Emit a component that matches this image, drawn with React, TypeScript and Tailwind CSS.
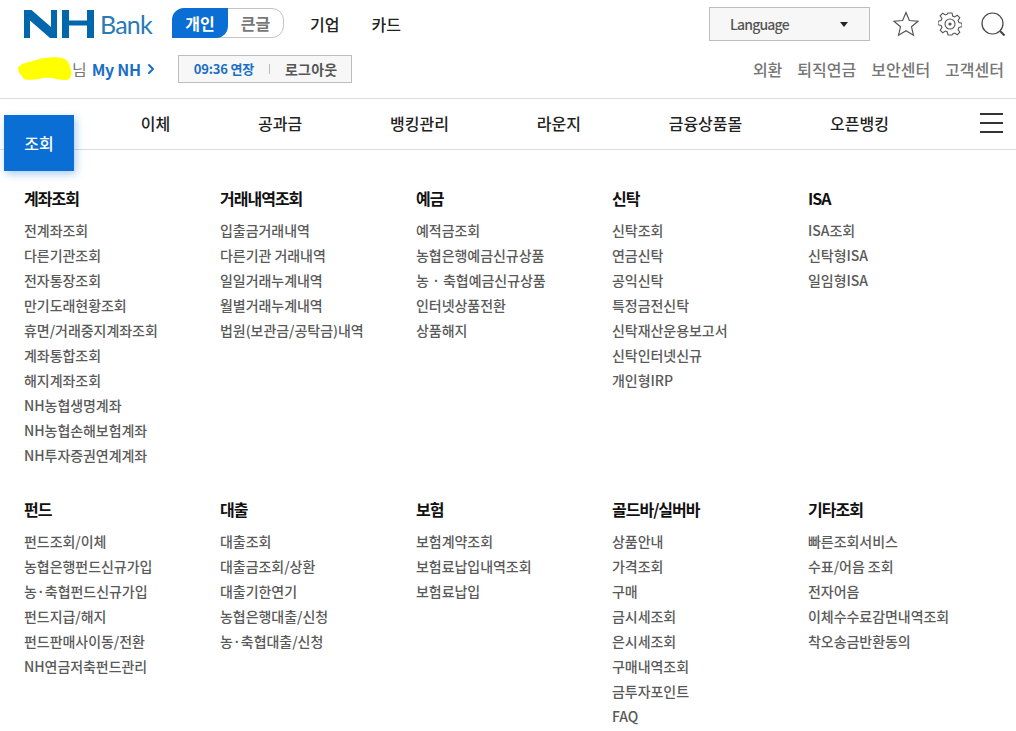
import { ChevronRight } from "lucide-react";

const font = "font-['Noto_Sans_CJK_KR','Noto_Sans',sans-serif]";

const navItems = ["이체", "공과금", "뱅킹관리", "라운지", "금융상품몰", "오픈뱅킹"];

const topRow = [
  { title: "계좌조회", items: ["전계좌조회", "다른기관조회", "전자통장조회", "만기도래현황조회", "휴면/거래중지계좌조회", "계좌통합조회", "해지계좌조회", "NH농협생명계좌", "NH농협손해보험계좌", "NH투자증권연계계좌"] },
  { title: "거래내역조회", items: ["입출금거래내역", "다른기관 거래내역", "일일거래누계내역", "월별거래누계내역", "법원(보관금/공탁금)내역"] },
  { title: "예금", items: ["예적금조회", "농협은행예금신규상품", "농 · 축협예금신규상품", "인터넷상품전환", "상품해지"] },
  { title: "신탁", items: ["신탁조회", "연금신탁", "공익신탁", "특정금전신탁", "신탁재산운용보고서", "신탁인터넷신규", "개인형IRP"] },
  { title: "ISA", items: ["ISA조회", "신탁형ISA", "일임형ISA"] },
];

const bottomRow = [
  { title: "펀드", items: ["펀드조회/이체", "농협은행펀드신규가입", "농·축협펀드신규가입", "펀드지급/해지", "펀드판매사이동/전환", "NH연금저축펀드관리"] },
  { title: "대출", items: ["대출조회", "대출금조회/상환", "대출기한연기", "농협은행대출/신청", "농·축협대출/신청"] },
  { title: "보험", items: ["보험계약조회", "보험료납입내역조회", "보험료납입"] },
  { title: "골드바/실버바", items: ["상품안내", "가격조회", "구매", "금시세조회", "은시세조회", "구매내역조회", "금투자포인트", "FAQ"] },
  { title: "기타조회", items: ["빠른조회서비스", "수표/어음 조회", "전자어음", "이체수수료감면내역조회", "착오송금반환동의"] },
];

const NhLogo = () => (
  <svg width="70" height="28" viewBox="0 0 70 28" className="shrink-0">
    <path d="M0 0h7.5L27 17V0h6v28h-7L6 10.5V28H0z" fill="#0067ac" />
    <path d="M38 0h7v10.5h18V0h7v28h-7V15.5H45V28h-7z" fill="#0067ac" />
  </svg>
);

const Blob = () => (
  <svg width="54" height="24" viewBox="0 0 54 24" className="shrink-0">
    <path
      d="M0 11C2 6 12 5 18 3 28 0 44-1 48 3c4 3 4 7 5 11 1 6-1 9-7 9-8 0-12-3-20-2-6 1-16 3-20 1-2-3-6-6-6-11z"
      fill="#ffff00"
    />
  </svg>
);

const Star = () => (
  <svg width="26" height="26" viewBox="0 0 26 26" fill="none" stroke="#555" strokeWidth="1.2">
    <path d="M13 1.5l3.4 8 8.6.7-6.5 5.6 2 8.4L13 19.8l-7.5 4.4 2-8.4L1 10.2l8.6-.7z" />
  </svg>
);

const Gear = () => (
  <svg width="24" height="24" viewBox="0 0 24 24" fill="none" stroke="#555" strokeWidth="1.1">
    <path d="M10 1h4l.7 3.1 1.9.8 2.7-1.7 2.5 2.7-1.7 2.6.8 2 3.1.7v3.6l-3.1.7-.8 2 1.7 2.6-2.5 2.7-2.7-1.7-1.9.8L14 23h-4l-.7-3.1-1.9-.8-2.7 1.7-2.5-2.7 1.7-2.6-.8-2-3.1-.7v-3.6l3.1-.7.8-2-1.7-2.6 2.5-2.7 2.7 1.7 1.9-.8z" />
    <circle cx="12" cy="12" r="5" />
    <circle cx="12" cy="12" r="1.6" fill="#555" stroke="none" />
  </svg>
);

const Search = () => (
  <svg width="24" height="24" viewBox="0 0 24 24" fill="none" stroke="#444" strokeWidth="1.2">
    <circle cx="11.5" cy="11.5" r="10.5" />
    <path d="M19 19l4.5 4.5" strokeWidth="2" />
  </svg>
);

const MenuGroup = ({ title, items }: { title: string; items: string[] }) => (
  <div>
    <h3 className="h-[25px] text-[16px] leading-[23px] font-bold tracking-[-1px] text-[#111]">{title}</h3>
    <ul className="mt-[6px]">
      {items.map((item) => (
        <li key={item} className="h-[25px] text-[14px] leading-[25px] font-medium tracking-[-0.05px] text-[#5a5a5a] whitespace-nowrap">
          {item}
        </li>
      ))}
    </ul>
  </div>
);

export default function App() {
  return (
    <div className={`w-[1016px] h-[731px] overflow-hidden bg-white ${font}`}>
      {/* top */}
      <div className="flex h-[50px] pl-[24px] pr-[11px] pt-[8px]">
        <div className="flex items-center h-[30px] w-[128px] mt-px">
          <NhLogo />
          <span className="ml-[6px] font-['Lato',sans-serif] text-[25px] leading-none tracking-[-0.8px] text-[#2a7ab8]">Bank</span>
        </div>
        <div className="flex ml-[20px] h-[30px] w-[112px] rounded-tl-[12px] rounded-br-[12px] rounded-tr-[12px] border border-[#c4c4c4] text-[16px] font-bold leading-[28px]">
          <span className="w-[56px] -my-px -ml-px h-[30px] rounded-tl-[12px] rounded-br-[12px] bg-[#0b6ed4] text-white text-center leading-[30px]">개인</span>
          <span className="flex-1 text-center text-[#777]">큰글</span>
        </div>
        <div className="flex ml-[26px] gap-[32px] h-[30px] text-[16px] leading-[32px] font-medium text-[#222]">
          <span>기업</span>
          <span>카드</span>
        </div>
        <div className="ml-auto flex items-center h-[34px] w-[161px] mr-[23px] -mt-px border border-[#bdbdbd] bg-[#f7f7f7] pl-[20px] pr-[21px] text-[14px] font-medium tracking-[-0.8px] text-[#555]">
          <span className="flex-1">Language</span>
          <span className="w-0 h-0 border-x-[4px] border-x-transparent border-t-[5px] border-t-[#222]" />
        </div>
        <div className="flex items-center gap-[19px] h-[32px]">
          <Star />
          <Gear />
          <Search />
        </div>
      </div>

      {/* second row */}
      <div className="flex items-center h-[49px] border-b border-[#dcdcdc] pl-[18px] pr-[12px] pb-[10px]">
        <Blob />
        <span className="text-[16px] text-[#777]">님</span>
        <span className="ml-[5px] text-[16px] font-bold text-[#1a6fc4] tracking-[-0.3px]">My NH</span>
        <ChevronRight size={16} strokeWidth={3} className="ml-[2px] text-[#1a6fc4]" />
        <div className="flex items-center ml-[19px] h-[28px] w-[174px] border border-[#bdbdbd] bg-[#f7f7f7] pl-[15px] text-[13px] font-bold">
          <span className="tracking-[-0.2px] text-[#1a6fc4]">09:36 연장</span>
          <span className="mx-[15px] h-[10px] w-px bg-[#bbb]" />
          <span className="text-[14px] tracking-[0.2px] text-[#555]">로그아웃</span>
        </div>
        <div className="ml-auto flex gap-[15px] text-[16px] font-medium text-[#777]">
          <span>외환</span>
          <span>퇴직연금</span>
          <span>보안센터</span>
          <span>고객센터</span>
        </div>
      </div>

      {/* nav */}
      <div className="flex items-center h-[51px] border-b border-[#dcdcdc] pl-[24px] pr-[13px] pb-[3px] text-[16px] font-medium text-[#222]">
        <div className="flex gap-[87.8px]">
          <div className="relative w-[29px]">
            <div className="absolute left-[-20px] top-[4px] flex h-[56px] w-[70px] items-center justify-center bg-[#0b6ed4] text-white shadow-[2px_3px_8px_rgba(11,110,212,0.35)]">
              조회
            </div>
          </div>
          {navItems.map((item) => (
            <span key={item}>{item}</span>
          ))}
        </div>
        <div className="ml-auto flex w-[23px] flex-col gap-[7px]">
          <span className="h-[2px] bg-[#333]" />
          <span className="h-[2px] bg-[#333]" />
          <span className="h-[2px] bg-[#333]" />
        </div>
      </div>

      {/* full menu */}
      <div className="grid grid-cols-[repeat(5,196px)] pl-[24px] pt-[37px] gap-y-[30px]">
        {topRow.map((group) => (
          <MenuGroup key={group.title} {...group} />
        ))}
        {bottomRow.map((group) => (
          <MenuGroup key={group.title} {...group} />
        ))}
      </div>
    </div>
  );
}
